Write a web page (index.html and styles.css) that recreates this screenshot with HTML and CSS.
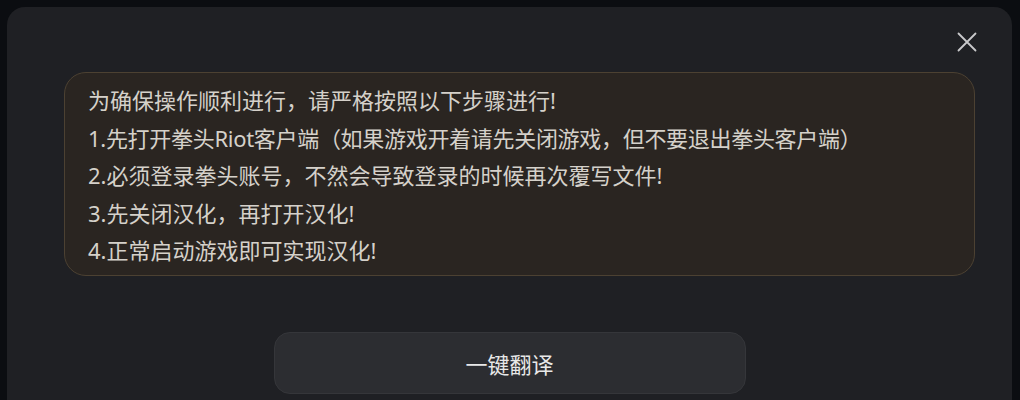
FILE: index.html
```html
<!DOCTYPE html>
<html lang="zh-CN">
<head>
<meta charset="utf-8">
<title>汉化</title>
<link rel="stylesheet" href="styles.css">
</head>
<body>
<div class="panel">
  <div class="header">
    <button class="close" aria-label="关闭">
      <svg viewBox="0 0 20 20" width="20" height="20"><path d="M1.5 1.5 L18.5 18.5 M18.5 1.5 L1.5 18.5" stroke="#c9c9cb" stroke-width="1.8" fill="none" stroke-linecap="round"/></svg>
    </button>
  </div>
  <div class="notice">
    <p>为确保操作顺利进行，请严格按照以下步骤进行!</p>
    <p class="tight">1.先打开拳头Riot客户端（如果游戏开着请先关闭游戏，但不要退出拳头客户端）</p>
    <p>2.必须登录拳头账号，不然会导致登录的时候再次覆写文件!</p>
    <p>3.先关闭汉化，再打开汉化!</p>
    <p>4.正常启动游戏即可实现汉化!</p>
  </div>
  <div class="actions">
    <button class="primary">一键翻译</button>
  </div>
</div>
</body>
</html>
```
FILE: styles.css
```css
html, body {
  margin: 0;
  padding: 0;
  height: 100%;
  overflow: hidden;
}
body {
  background: #0b0d11;
  font-family: "Noto Sans", "Noto Sans CJK SC", sans-serif;
}
.panel {
  margin: 7px 8px 0 7px;
  height: calc(100% - 7px);
  background: #1f2024;
  border-radius: 18px 18px 0 0;
  display: flex;
  flex-direction: column;
}
.header {
  height: 65px;
  flex: none;
  display: flex;
  justify-content: flex-end;
  align-items: flex-start;
  padding-right: 35px;
  box-sizing: border-box;
}
.close {
  margin-top: 25px;
  width: 20px;
  height: 20px;
  padding: 0;
  border: 0;
  background: none;
  display: flex;
}
.notice {
  margin: 0 37px 0 57px;
  background: #2a2521;
  border: 1px solid #4c4132;
  border-radius: 22px;
  padding: 9px 20px 5px 23px;
  color: #d5d1ca;
  font-size: 22px;
  line-height: 37.5px;
}
.notice p {
  margin: 0;
  white-space: nowrap;
}
.notice .tight {
  letter-spacing: -0.3px;
}
.actions {
  display: flex;
  justify-content: center;
  padding-top: 56px;
}
.primary {
  width: 472px;
  height: 62px;
  background: #2c2d31;
  border: 1px solid #35363a;
  border-radius: 16px;
  color: #e8e8e8;
  font-family: "Noto Sans CJK SC", sans-serif;
  font-size: 22px;
  padding: 0;
}
```
